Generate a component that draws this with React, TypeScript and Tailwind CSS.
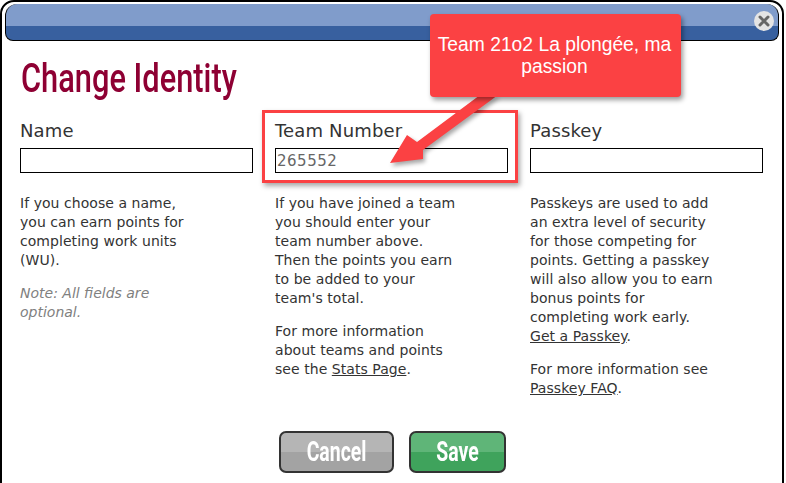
export default function App() {
  const body = "text-[14px] leading-[19px] text-[#333] tracking-[0.05px]";
  const input = "block w-full h-[25px] border border-black bg-white px-[1px] text-[15px] tracking-[0.5px] text-[#666] outline-none";
  const link = "underline";
  const head = "text-[18px] leading-[24px] text-[#333] tracking-[0.15px]";
  const btn = "flex h-[42px] items-center justify-center rounded-[7px] border-2 border-[#333] font-['Liberation_Sans_Narrow','Roboto',sans-serif] text-white";
  return (
    <div className="relative w-[786px] h-[483px] overflow-hidden bg-white font-['DejaVu_Sans','Verdana',sans-serif]">
      <div className="h-[600px] w-[784px] rounded-[14px] border-2 border-black bg-white px-[3px] pt-[2px]">
        <div className="h-[37px] rounded-t-[12px] rounded-b-[8px] border border-black border-t-0 bg-[linear-gradient(#809ccb_0,#809ccb_60%,#38609f_60%,#38609f_100%)]" />
        <h1 className="ml-[16px] mt-[13px] h-[52px] origin-left scale-x-[0.77] whitespace-nowrap font-['Liberation_Sans_Narrow','Roboto',sans-serif] text-[40px] leading-[50px] font-medium text-[#8e0033]">
          Change Identity
        </h1>
        <div className="ml-[15px] mt-[13px] grid w-[743px] grid-cols-3 gap-[22px]">
          <div>
            <div className={head}>Name</div>
            <input className={`${input} mt-[5px]`} />
            <p className={`${body} mt-[21px]`}>If you choose a name,<br />you can earn points for<br />completing work units<br />(WU).</p>
            <p className="mt-[14px] text-[14px] leading-[19px] italic text-[#808080]">Note: All fields are<br />optional.</p>
          </div>
          <div>
            <div className={head}>Team Number</div>
            <input className={`${input} mt-[5px]`} defaultValue="265552" />
            <p className={`${body} mt-[21px]`}>If you have joined a team<br />you should enter your<br />team number above.<br />Then the points you earn<br />to be added to your<br />team's total.</p>
            <p className={`${body} mt-[14px]`}>For more information<br />about teams and points<br />see the <span className={link}>Stats Page</span>.</p>
          </div>
          <div>
            <div className={head}>Passkey</div>
            <input className={`${input} mt-[5px]`} />
            <p className={`${body} mt-[21px]`}>Passkeys are used to add<br />an extra level of security<br />for those competing for<br />points. Getting a passkey<br />will also allow you to earn<br />bonus points for<br />completing work early.<br /><span className={link}>Get a Passkey</span>.</p>
            <p className={`${body} mt-[14px]`}>For more information see<br /><span className={link}>Passkey FAQ</span>.</p>
          </div>
        </div>
      </div>

      <div className="absolute left-[279px] top-[431px] flex gap-[15px]">
        <button className={`${btn} w-[115px] bg-[linear-gradient(#b5b5b5_0,#b5b5b5_50%,#a3a3a3_50%,#a3a3a3_100%)]`}><span className="inline-block scale-x-[0.72] text-[27px] font-bold">Cancel</span></button>
        <button className={`${btn} w-[97px] bg-[linear-gradient(#5fb578_0,#5fb578_50%,#3fa35c_50%,#3fa35c_100%)]`}><span className="inline-block scale-x-[0.72] text-[27px] font-bold">Save</span></button>
      </div>

      <div className="absolute left-[754px] top-[11px] flex h-[20px] w-[20px] items-center justify-center rounded-full bg-[#e4e4e4]">
        <svg width="12" height="12" viewBox="0 0 12 12"><path d="M2 2 L10 10 M10 2 L2 10" stroke="#666" strokeWidth="3" strokeLinecap="round" /></svg>
      </div>

      <div className="absolute left-[262px] top-[110px] h-[73px] w-[256px] border-[3px] border-[#fb4143] shadow-[2px_3px_5px_rgba(0,0,0,0.35)]" />

      <svg className="absolute left-[380px] top-[90px]" width="130" height="90" viewBox="0 0 130 90" style={{ filter: "drop-shadow(2px 3px 2px rgba(0,0,0,0.35))" }}>
        <path d="M10 73 L27 45 L37 52 L100 5 L118 5 L43 60 L43 69 Z" fill="#fb4143" />
      </svg>

      <div className="absolute left-[430px] top-[14px] flex h-[83px] w-[251px] items-center justify-center rounded-[4px] bg-[#fb4143] pl-[5px] pr-[7px] text-center font-['Liberation_Sans',Arial,sans-serif] text-[19.3px] leading-[22px] text-white shadow-[2px_3px_5px_rgba(0,0,0,0.4)]">
        Team 21o2 La plongée, ma passion
      </div>
    </div>
  );
}
